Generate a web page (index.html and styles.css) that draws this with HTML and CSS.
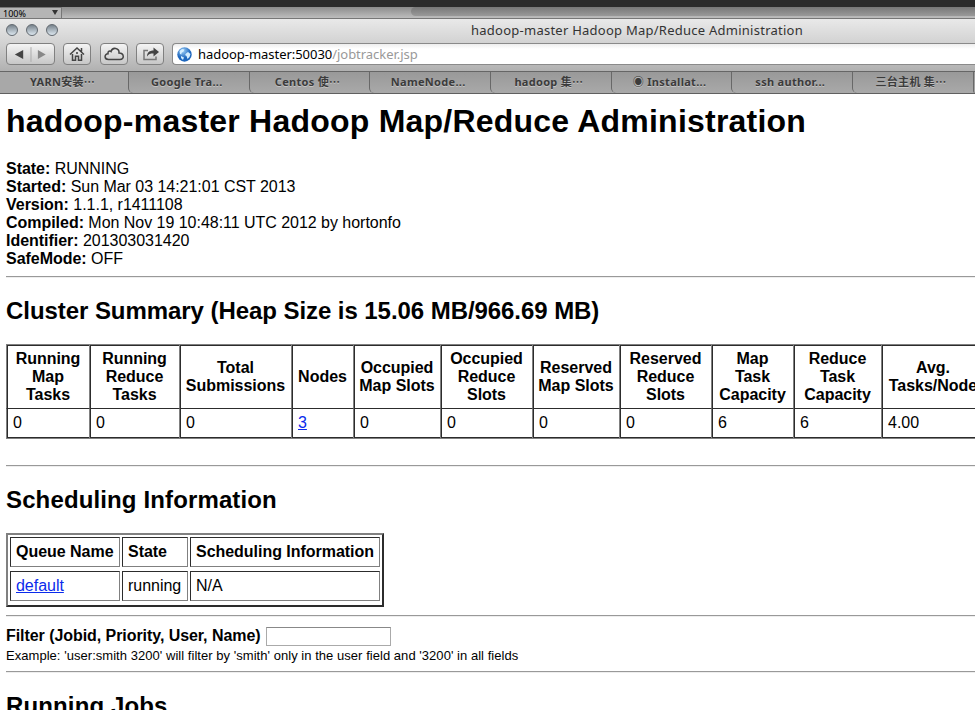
FILE: index.html
```
<!DOCTYPE html>
<html lang="en">
<head>
<meta charset="utf-8">
<title>hadoop-master Hadoop Map/Reduce Administration</title>
<link rel="stylesheet" href="styles.css">
</head>
<body>
<div class="desktop"></div>
<div class="strip"><div class="zoom"><span>100%</span><i></i></div><div class="scroller"></div></div>
<header class="chrome">
  <div class="titlebar"><div class="lights"><i></i><i></i><i></i></div><div class="title">hadoop-master Hadoop Map/Reduce Administration</div></div>
  <div class="toolbar">
    <div class="btn nav"><svg width="48" height="20" viewBox="0 0 48 20"><path d="M16.500 6v9L8 10.500z" fill="#444"/><path d="M31.500 6v9L39.500 10.500z" fill="#888"/><path d="M24.500 3v15" stroke="#aaa"/></svg></div>
    <div class="btn"><svg width="26" height="20" viewBox="0 0 26 20" fill="none" stroke="#444" stroke-width="1.500"><path d="M6 10.500L13 4l7 6.500M8.500 10v6.200h3v-4h3v4h3V10M17.500 7.500V4"/><path d="M12.200 9h1.600" stroke-width="2"/></svg></div>
    <div class="btn"><svg width="26" height="20" viewBox="0 0 26 20" fill="none" stroke="#444" stroke-width="1.500"><path d="M7.500 15.500C3 15.500 3 9.800 7 9.700C6.500 7 9 6.500 10 7.500C11.500 2.500 18.500 4 18 9C23.500 9 23.500 15.500 19 15.500z"/></svg></div>
    <div class="btn"><svg width="26" height="20" viewBox="0 0 26 20" fill="none"><path d="M11 6.500H7v9h12V12.500" stroke="#777" stroke-width="1.500"/><path d="M10 12.500c0-4 2.500-6 6.500-6V3.500L22 8l-5.500 4.500V9.500c-3 0-5 .5-6.500 3z" fill="#444"/></svg></div>
    <div class="address"><svg width="15" height="15" viewBox="0 0 15 15"><defs><radialGradient id="globe" cx=".4" cy=".25"><stop offset="0" stop-color="#9accf5"/><stop offset="1" stop-color="#1d66bd"/></radialGradient></defs><circle cx="7.500" cy="7.500" r="7.200" fill="url(#globe)"/><path d="M2.500 4l2.500-2 2.500.5-1 2-2 1.500v1.500L3 7zM9 6.500l2-1.500 2.500 2-1 3-2 2-1-3-1.500-1zM4 9l3 1.500-1 2.500-2-2z" fill="#d4edff"/></svg><span class="host">hadoop-master:50030</span><span class="path">/jobtracker.jsp</span></div>
  </div>
  <nav class="tabs">
    <div>YARN安装⋯</div><div>Google Tra...</div><div>Centos 使⋯</div><div>NameNode...</div><div>hadoop 集⋯</div><div>◉ Installat...</div><div>ssh author...</div><div>三台主机 集⋯</div><div class="rest"></div>
  </nav>
</header>
<main>
  <h1>hadoop-master Hadoop Map/Reduce Administration</h1>
  <div class="info">
    <b>State:</b> RUNNING<br>
    <b>Started:</b> Sun Mar 03 14:21:01 CST 2013<br>
    <b>Version:</b> 1.1.1, r1411108<br>
    <b>Compiled:</b> Mon Nov 19 10:48:11 UTC 2012 by hortonfo<br>
    <b>Identifier:</b> 201303031420<br>
    <b>SafeMode:</b> OFF
  </div>
  <hr>
  <h2 class="cluster">Cluster Summary (Heap Size is 15.06 MB/966.69 MB)</h2>
  <table class="summary">
    <colgroup><col class="w83"><col class="w90"><col class="w112"><col class="w62"><col class="w87"><col class="w92"><col class="w87"><col class="w92"><col class="w82"><col class="w88"><col class="w103"></colgroup>
    <tr><th>Running<br>Map<br>Tasks</th><th>Running<br>Reduce<br>Tasks</th><th>Total<br>Submissions</th><th>Nodes</th><th>Occupied<br>Map Slots</th><th>Occupied<br>Reduce<br>Slots</th><th>Reserved<br>Map Slots</th><th>Reserved<br>Reduce<br>Slots</th><th>Map<br>Task<br>Capacity</th><th>Reduce<br>Task<br>Capacity</th><th>Avg.<br>Tasks/Node</th></tr>
    <tr><td>0</td><td>0</td><td>0</td><td><a href="#">3</a></td><td>0</td><td>0</td><td>0</td><td>0</td><td>6</td><td>6</td><td>4.00</td></tr>
  </table>
  <hr>
  <h2 class="scheduling">Scheduling Information</h2>
  <div class="queues">
    <b>Queue Name</b><b>State</b><b>Scheduling Information</b>
    <span><a href="#">default</a></span><span>running</span><span>N/A</span>
  </div>
  <hr>
  <div class="filter"><b>Filter (Jobid, Priority, User, Name)</b><input type="text"></div>
  <div class="example">Example: 'user:smith 3200' will filter by 'smith' only in the user field and '3200' in all fields</div>
  <hr>
  <h2 class="jobs">Running Jobs</h2>
</main>
</body>
</html>
```
FILE: styles.css
```
* { box-sizing: border-box; }
html, body { margin: 0; height: 710px; overflow: hidden; }
body { background: #fff; color: #000; font: 16px/18px "Liberation Sans", sans-serif; }
.desktop { height: 7px; background: #2b2b2b; }
.strip { display: flex; height: 11px; background: linear-gradient(#8c8c8c, #bdbdbd); }
.zoom { display: flex; align-items: center; justify-content: space-between; width: 62px; height: 12px; padding: 0 3px; border: 1px solid #777; border-left: 0; font: 9px/9px "Noto Sans", sans-serif; background: #b5b5b5; }
.zoom i { margin-bottom: 2px; border: 3.500px solid transparent; border-top: 5px solid #333; border-bottom: 0; }
.scroller { flex: 1; height: 9px; margin-left: 349px; border-radius: 5px 0 0 5px; background: linear-gradient(#777, #999); }
.chrome { height: 76px; border-top: 1px solid #777; background: linear-gradient(#e9e9e9, #d0d0d0 35%, #b0b0b0 70%); font-family: "Noto Sans", "Noto Sans CJK SC", sans-serif; }
.titlebar { display: flex; align-items: center; height: 22px; }
.lights { display: flex; gap: 8px; width: 471px; padding-left: 6px; }
.lights i { width: 12px; height: 12px; border: 1px solid #626970; border-radius: 50%; background: linear-gradient(#77828b, #a5b0b9 45%, #dce7ef); }
.title { color: #333; font-size: 13px; letter-spacing: .25px; white-space: nowrap; }
.toolbar { display: flex; align-items: center; height: 30px; padding: 0 0 4px 6px; }
.btn { display: flex; align-items: center; justify-content: center; width: 28px; height: 22px; margin-right: 8.500px; border: 1px solid #808080; border-radius: 4px; background: linear-gradient(#f4f4f4, #c7c7c7); }
.btn.nav { width: 49px; margin-right: 8px; }
.address { display: flex; align-items: center; flex: 1; height: 22px; margin-left: -.5px; padding-left: 4px; border: 1px solid #8a8a8a; border-right: 0; border-radius: 4px 0 0 4px; background: linear-gradient(#eee, #fff 5px); font-size: 13px; letter-spacing: -.04px; white-space: nowrap; }
.host { margin-left: 6px; color: #000; }
.path { color: #999; }
.tabs { display: flex; height: 23px; overflow: hidden; border-top: 1px solid #666; border-bottom: 1px solid #606060; background: #aaa; }
.tabs div { flex: 0 0 120.700px; padding-right: 4px; border-left: 1px solid #686868; border-radius: 0 0 0 5px; background: linear-gradient(#999, #a9a9a9); color: #3b3b3b; font-size: 11px; font-weight: 700; letter-spacing: .3px; line-height: 20px; text-align: center; text-shadow: 0 1px #c4c4c4; white-space: nowrap; }
.tabs div:first-child { flex-basis: 128px; padding-right: 3px; border: 0; border-radius: 0; background: #a8a8a8; }
.tabs .rest { flex: 1 1 0; min-width: 0; padding: 0; }
main { width: 975px; overflow: hidden; padding-left: 6px; }
h1, h2 { margin: 0; white-space: nowrap; }
h1 { height: 66px; padding-top: 9px; font-size: 32px; line-height: 36px; letter-spacing: .22px; }
.info { height: 116px; letter-spacing: -.03px; white-space: nowrap; }
hr { height: 2px; margin: 0; border: 0; border-top: 1px solid #999; border-bottom: 1px solid #eee; }
h2 { font-size: 24px; line-height: 28px; }
.cluster { height: 66px; padding-top: 19px; letter-spacing: -.06px; }
.summary { width: 979px; margin: 0 0 26px; border-spacing: 0; border-right: 1px solid #808080; table-layout: fixed; }
.summary th, .summary td { padding: 0; border-left: 1px solid #808080; box-shadow: inset 1px 0 #2c2c2c; }
.summary th { height: 64px; border-top: 1px solid #808080; box-shadow: inset 1px 1px #2c2c2c; letter-spacing: -.02px; white-space: nowrap; }
.summary td { height: 31px; padding: 0 0 2px 6px; border-top: 1px solid #2c2c2c; border-bottom: 1px solid #808080; box-shadow: inset 1px -1px #2c2c2c; }
.w62 { width: 62px; } .w82 { width: 82px; } .w83 { width: 83px; } .w87 { width: 87px; } .w88 { width: 88px; } .w90 { width: 90px; } .w92 { width: 92px; } .w103 { width: 103px; } .w112 { width: 112px; }
a { color: #0a2bec; }
.scheduling { height: 66px; padding-top: 19px; letter-spacing: .13px; }
.queues { display: grid; grid-template: 30px 30px / 110px 66px 190px; gap: 4px 2px; width: 378px; height: 74px; margin-bottom: 8px; padding: 2px; border: 2px solid; border-color: #808080 #2c2c2c #2c2c2c #808080; }
.queues > * { padding: 5px; border: 1px solid; border-color: #2c2c2c #808080 #808080 #2c2c2c; letter-spacing: -.03px; white-space: nowrap; }
.filter { display: flex; align-items: center; height: 29px; padding-top: 9px; letter-spacing: -.06px; }
.filter input { width: 125px; height: 19px; margin: 1px 0 0 5px; border: 1px solid #aaa; border-top-color: #888; background: #fff; }
.example { height: 25px; font-size: 13px; line-height: 19px; letter-spacing: .04px; white-space: nowrap; }
.jobs { padding-top: 19px; letter-spacing: .13px; }
```
